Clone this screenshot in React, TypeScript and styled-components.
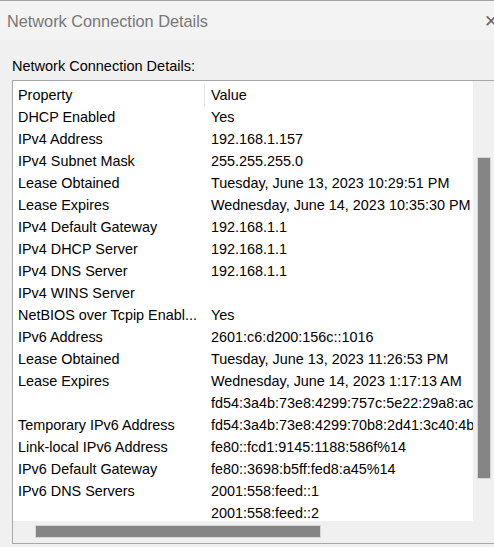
import React from "react";
import styled, { createGlobalStyle } from "styled-components";

const GlobalStyle = createGlobalStyle`
  html, body {
    margin: 0;
    padding: 0;
    background: #f0f0f0;
  }
`;

const Window = styled.div`
  width: 494px;
  height: 547px;
  overflow: hidden;
  background: #f0f0f0;
  border-top: 1px solid #a3a3a3;
  box-sizing: border-box;
  font-family: "Liberation Sans", Arial, sans-serif;
  color: #000;
`;

const TitleBar = styled.div`
  height: 39px;
  display: flex;
  align-items: center;
  padding: 2px 0 0 7px;
  box-sizing: border-box;
  background: #f3f3f3;
  overflow: hidden;
`;

const Title = styled.span`
  flex: 1;
  font-size: 16.3px;
  color: #777;
`;

const Close = styled.span`
  flex: 0 0 auto;
  width: 10px;
  overflow: visible;
  font-size: 17px;
  line-height: 1;
  color: #6a6a6a;
  font-family: "DejaVu Sans", sans-serif;
`;

const Caption = styled.div`
  font-size: 14.5px;
  line-height: 20px;
  padding: 16px 0 0 12px;
  height: 20px;
  margin-bottom: 4px;
`;

const ListBox = styled.div`
  margin-left: 12px;
  width: 500px;
  height: 464px;
  border: 1px solid #a8a8a8;
  border-right: none;
  box-sizing: border-box;
  display: grid;
  grid-template-columns: 460px 1fr;
  grid-template-rows: 440px 1fr;
  background: #f0f0f0;
`;

const Content = styled.div`
  background: #fff;
  overflow: hidden;
  padding-top: 3px;
`;

const Row = styled.div`
  display: grid;
  grid-template-columns: 192px 1fr;
  height: 22px;
  align-items: center;
  font-size: 14.4px;
  white-space: nowrap;
`;

const Cell = styled.div<{ $value?: boolean; $header?: boolean }>`
  padding-left: ${(p) => (p.$value ? "6px" : "5px")};
  overflow: hidden;
  height: 22px;
  line-height: 22px;
  border-right: ${(p) => (p.$header && !p.$value ? "1px solid #e3e3e3" : "none")};
`;

const VTrack = styled.div`
  padding: 77px 0 0 5px;
`;

const VThumb = styled.div`
  width: 12px;
  height: 320px;
  background: #858585;
  box-shadow: 0 0 0 1px #d6d6d6;
`;

const HTrack = styled.div`
  padding: 5px 0 0 23px;
`;

const HThumb = styled.div`
  width: 284px;
  height: 11px;
  background: #858585;
  box-shadow: 0 0 0 1px #d6d6d6;
`;

const rows: [string, string][] = [
  ["DHCP Enabled", "Yes"],
  ["IPv4 Address", "192.168.1.157"],
  ["IPv4 Subnet Mask", "255.255.255.0"],
  ["Lease Obtained", "Tuesday, June 13, 2023 10:29:51 PM"],
  ["Lease Expires", "Wednesday, June 14, 2023 10:35:30 PM"],
  ["IPv4 Default Gateway", "192.168.1.1"],
  ["IPv4 DHCP Server", "192.168.1.1"],
  ["IPv4 DNS Server", "192.168.1.1"],
  ["IPv4 WINS Server", ""],
  ["NetBIOS over Tcpip Enabl...", "Yes"],
  ["IPv6 Address", "2601:c6:d200:156c::1016"],
  ["Lease Obtained", "Tuesday, June 13, 2023 11:26:53 PM"],
  ["Lease Expires", "Wednesday, June 14, 2023 1:17:13 AM"],
  ["", "fd54:3a4b:73e8:4299:757c:5e22:29a8:ac1f"],
  ["Temporary IPv6 Address", "fd54:3a4b:73e8:4299:70b8:2d41:3c40:4b1c"],
  ["Link-local IPv6 Address", "fe80::fcd1:9145:1188:586f%14"],
  ["IPv6 Default Gateway", "fe80::3698:b5ff:fed8:a45%14"],
  ["IPv6 DNS Servers", "2001:558:feed::1"],
  ["", "2001:558:feed::2"],
];

export default function App() {
  return (
    <>
      <GlobalStyle />
      <Window>
        <TitleBar>
          <Title>Network Connection Details</Title>
          <Close>✕</Close>
        </TitleBar>
        <Caption>Network Connection Details:</Caption>
        <ListBox>
          <Content>
            <Row>
              <Cell $header>Property</Cell>
              <Cell $header $value>Value</Cell>
            </Row>
            {rows.map(([k, v], i) => (
              <Row key={i}>
                <Cell>{k}</Cell>
                <Cell $value>{v}</Cell>
              </Row>
            ))}
          </Content>
          <VTrack>
            <VThumb />
          </VTrack>
          <HTrack>
            <HThumb />
          </HTrack>
          <div />
        </ListBox>
      </Window>
    </>
  );
}
